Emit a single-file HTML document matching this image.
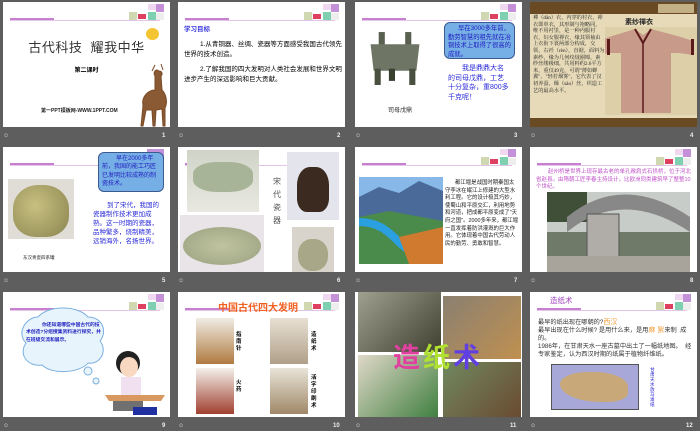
<!DOCTYPE html>
<html><head><meta charset="utf-8">
<style>
*{margin:0;padding:0;box-sizing:border-box}
body{width:700px;height:431px;background:#5e5e5e;position:relative;overflow:hidden;font-family:"Liberation Sans","Noto Sans CJK SC",sans-serif}
.s{position:absolute;width:167px;height:125px;background:#fff;overflow:hidden}
.a{position:absolute}
.hl{position:absolute;left:7px;top:16px;width:44px;height:2px;background:#c77fd0}
.hl2{position:absolute;left:7px;top:18px;width:150px;height:1px;background:#e4c4e8}
.dec{position:absolute;left:126px;top:2px;width:35px;height:17px}
.lab{position:absolute;color:#ddd;font-size:6px}
.num{position:absolute;color:#eee;font-size:6px;font-weight:bold}
.t{position:absolute;font-size:6.3px;line-height:9px}
.blue{color:#2b2bd8}
</style></head><body>

<div class="s" style="left:3px;top:2px">
 <div class="hl"></div><div class="hl2"></div>
 <svg class="dec" viewBox="0 0 35 17"><rect x="19" y="0" width="8" height="6" fill="#f0d8f0"/><rect x="27" y="0" width="8" height="8" fill="#c490d8"/><rect x="0" y="8" width="8" height="8" fill="#cfd8b0"/><rect x="9" y="10" width="8" height="5" fill="#e04060"/><rect x="19" y="8" width="8" height="8" fill="#7fd0b0"/><rect x="27" y="9" width="8" height="7" fill="#eee"/></svg>
 <div class="a" style="left:143px;top:26px;width:13px;height:12px;border-radius:50%;background:#f5c531"></div>
 <div class="a" style="left:0;top:35px;width:167px;text-align:center;font-size:13px;color:#333;letter-spacing:0.5px">古代科技&nbsp; 耀我中华</div>
 <div class="a" style="left:0;top:63px;width:167px;text-align:center;font-size:6px;font-weight:bold">第二课时</div>
 <div class="a" style="left:38px;top:105px;font-size:5px;font-weight:bold;color:#222">第一PPT模板网-WWW.1PPT.COM</div>
 <svg class="a" style="left:132px;top:60px" width="35" height="66" viewBox="0 0 35 66"><path d="M20 3l-3 6M26 2l2 6M22 8c-2 0-4 3-2 6l0 14c-6 0-14 6-12 16l-2 20 2 0 3-16 6 0 1 16 2 0 1-16 6-1 1 17 2 0 0-18c3-6 1-14-3-18l-1-14c2-2 1-5-2-5z" fill="#8a5a35" stroke="#7a4a25" stroke-width="1"/></svg>
</div>
<div class="lab" style="left:3px;top:133px">☺</div><div class="num" style="left:162px;top:133px">1</div>

<div class="s" style="left:178px;top:2px">
 <div class="hl"></div><div class="hl2"></div>
 <svg class="dec" viewBox="0 0 35 17"><rect x="19" y="0" width="8" height="6" fill="#f0d8f0"/><rect x="27" y="0" width="8" height="8" fill="#c490d8"/><rect x="0" y="8" width="8" height="8" fill="#cfd8b0"/><rect x="9" y="10" width="8" height="5" fill="#e04060"/><rect x="19" y="8" width="8" height="8" fill="#7fd0b0"/><rect x="27" y="9" width="8" height="7" fill="#eee"/></svg>
 <div class="a" style="left:6px;top:21px;font-size:6.5px;color:#3a3ae0;font-weight:bold">学习目标</div>
 <div class="t" style="left:6px;top:38px;width:158px;font-size:6.5px;line-height:10px;text-indent:16px">1.从青铜器、丝绸、瓷器等方面感受我国古代领先世界的技术创造。</div>
 <div class="t" style="left:6px;top:63px;width:158px;font-size:6.5px;line-height:10px;text-indent:16px">2.了解我国的四大发明对人类社会发展和世界文明进步产生的深远影响和巨大贡献。</div>
</div>
<div class="lab" style="left:178px;top:133px">☺</div><div class="num" style="left:337px;top:133px">2</div>

<div class="s" style="left:355px;top:2px">
 <div class="hl"></div><div class="hl2"></div>
 <svg class="dec" viewBox="0 0 35 17"><rect x="19" y="0" width="8" height="6" fill="#f0d8f0"/><rect x="27" y="0" width="8" height="8" fill="#c490d8"/><rect x="0" y="8" width="8" height="8" fill="#cfd8b0"/><rect x="9" y="10" width="8" height="5" fill="#e04060"/><rect x="19" y="8" width="8" height="8" fill="#7fd0b0"/><rect x="27" y="9" width="8" height="7" fill="#eee"/></svg>
 <svg class="a" style="left:13px;top:28px" width="54" height="56" viewBox="0 0 52 55"><rect x="10" y="2" width="6" height="14" fill="#5a6050"/><rect x="36" y="2" width="6" height="14" fill="#5a6050"/><path d="M2 14h48l-3 26H5z" fill="#6f7565"/><rect x="6" y="38" width="6" height="16" fill="#4a5040"/><rect x="40" y="38" width="6" height="16" fill="#4a5040"/><rect x="20" y="38" width="6" height="12" fill="#3a4030"/></svg>
 <div class="a" style="left:33px;top:103px;font-size:6px;color:#222">司母戊鼎</div>
 <div class="a" style="left:89px;top:20px;width:71px;height:37px;border-radius:6px;background:#76aee6;border:1px solid #3a5a90;font-size:6.3px;line-height:8.5px;color:#2020c0;padding:2px 3px;text-indent:10px">早在3000多年前，勤劳智慧的祖先就在冶铜技术上取得了很高的成就。</div>
 <div class="a blue" style="left:93px;top:62px;width:62px;font-size:7px;line-height:9.5px;text-indent:14px">我是鼎鼎大名的司母戊鼎，工艺十分复杂，重800多千克呢！</div>
</div>
<div class="lab" style="left:355px;top:133px">☺</div><div class="num" style="left:514px;top:133px">3</div>

<div class="s" style="left:530px;top:2px;background:#6a4a22">
 <div class="a" style="left:128px;top:2px;width:36px;height:9px;background:#d8c8a0;opacity:.8"></div>
 <div class="a" style="left:0;top:12px;width:167px;height:104px;background:#e6dab8"></div>
 <div class="a" style="left:3px;top:13px;width:72px;font-size:5.2px;line-height:6.6px;color:#222;font-family:'Liberation Serif','Noto Serif CJK SC',serif">襌（dān）衣，内穿的衬衣，禅衣即单衣，其形制与袍略同，唯不用衬里，是一种内服衬衣，妇女服禅衣，缘其领袖由上衣衔下裳两部分构成，交领，右衽（rèn），直裾，面料为素纱，缘为几何纹绒圈锦，素纱丝缕极细，共用料约2.6平方米，重仅49克，可谓"薄如蝉翼"、"轻若烟雾"，它代表了汉初养蚕，缫（sāo）丝，织造工艺的最高水平。</div>
 <div class="a" style="left:95px;top:15px;font-size:7px;font-weight:bold;color:#222">素纱禪衣</div>
 <svg class="a" style="left:75px;top:25px" width="92" height="88" viewBox="0 0 92 88"><rect width="92" height="88" fill="#ddd0a8"/><path d="M30 2l8 6 8-6 30 8 12 4 0 14-14-2-8 0 0 60-50 0 0-60-10 0-14 2 0-14 12-4z" fill="#c89a8a"/><path d="M30 2l8 14 8-14" stroke="#5a1a1a" stroke-width="2" fill="none"/><path d="M38 16l0 70" stroke="#5a1a1a" stroke-width="1.5"/><rect x="86" y="12" width="3" height="16" fill="#5a1a1a"/><rect x="2" y="12" width="3" height="16" fill="#5a1a1a"/></svg>
</div>
<div class="lab" style="left:530px;top:133px">☺</div><div class="num" style="left:690px;top:133px">4</div>

<div class="s" style="left:3px;top:147px">
 <div class="hl"></div><div class="hl2"></div>
 <div class="a" style="left:144px;top:2px;width:17px;height:14px;background:#c490d8"></div>
 <div class="a" style="left:5px;top:32px;width:66px;height:60px;background:#e0dcd6"></div>
 <div class="a" style="left:10px;top:38px;width:56px;height:52px;border-radius:45% 45% 40% 40%;background:radial-gradient(circle at 40% 40%,#c8c080,#8a8450)"></div>
 <div class="a" style="left:20px;top:108px;font-size:4.5px;color:#222">东汉青瓷四系罐</div>
 <div class="a" style="left:95px;top:5px;width:66px;height:40px;border-radius:6px;background:#76aee6;border:1px solid #3a5a90;font-size:6px;line-height:8.3px;color:#2020c0;padding:2px 3px;text-indent:14px">早在2000多年前，我国的能工巧匠已发明比较成熟的制瓷技术。</div>
 <div class="a blue" style="left:90px;top:54px;width:70px;font-size:6.5px;line-height:9px;text-indent:14px">到了宋代，我国的瓷器制作技术更加成熟。这一时期的瓷器，品种繁多，烧制精美，远销海外，名扬世界。</div>
</div>
<div class="lab" style="left:3px;top:278px">☺</div><div class="num" style="left:162px;top:278px">5</div>

<div class="s" style="left:178px;top:147px">
 <div class="hl"></div><div class="hl2"></div>
 <div class="a" style="left:9px;top:3px;width:72px;height:62px;background:linear-gradient(#d0d4c8,#e8e8e0)"></div>
 <div class="a" style="left:15px;top:15px;width:60px;height:30px;border-radius:40%;background:#a8b498"></div>
 <div class="a" style="left:2px;top:68px;width:84px;height:58px;background:#e8e4e8"></div>
 <div class="a" style="left:5px;top:80px;width:78px;height:38px;border-radius:50%;background:radial-gradient(#c0c4a0,#9aa080)"></div>
 <div class="a" style="left:95px;top:28px;width:10px;font-size:8px;line-height:13px;color:#555">宋代瓷器</div>
 <div class="a" style="left:109px;top:5px;width:52px;height:68px;background:#e4e4ec"></div>
 <div class="a" style="left:119px;top:20px;width:32px;height:45px;border-radius:40% 40% 30% 30%;background:#3a2a20"></div>
 <div class="a" style="left:114px;top:80px;width:42px;height:46px;background:#d8d4cc"></div>
 <div class="a" style="left:120px;top:92px;width:30px;height:32px;border-radius:45%;background:#a8a888"></div>
</div>
<div class="lab" style="left:178px;top:278px">☺</div><div class="num" style="left:337px;top:278px">6</div>

<div class="s" style="left:355px;top:147px">
 <div class="hl"></div><div class="hl2"></div>
 <svg class="dec" viewBox="0 0 35 17"><rect x="19" y="0" width="8" height="6" fill="#f0d8f0"/><rect x="27" y="0" width="8" height="8" fill="#c490d8"/><rect x="0" y="8" width="8" height="8" fill="#cfd8b0"/><rect x="9" y="10" width="8" height="5" fill="#e04060"/><rect x="19" y="8" width="8" height="8" fill="#7fd0b0"/><rect x="27" y="9" width="8" height="7" fill="#eee"/></svg>
 <svg class="a" style="left:4px;top:30px" width="84" height="87" viewBox="0 0 84 87"><rect width="84" height="87" fill="#88b8e8"/><path d="M0 20l20-10 20 6 20-12 24 10v73H0z" fill="#4a6a9a"/><path d="M0 40l30-6 54 10v43H0z" fill="#4a8a4a"/><path d="M0 45c20 0 30 10 40 20s20 14 30 22" stroke="#2aa0e0" stroke-width="8" fill="none"/><path d="M40 60l44-10v37H50z" fill="#d07a30"/></svg>
 <div class="a" style="left:90px;top:33px;width:74px;font-size:5.4px;line-height:7.6px;color:#222;text-indent:10px">都江堰是战国时期秦国太守李冰在岷江上修建的大型水利工程。它的设计极其巧妙，使蜀山和平原交汇，利用地势和河道，把成都平原变成了"天府之国"。2000多年来，都江堰一直发挥着防洪灌溉的巨大作用。它体现着中国古代劳动人民的勤劳、勇敢和智慧。</div>
</div>
<div class="lab" style="left:355px;top:278px">☺</div><div class="num" style="left:514px;top:278px">7</div>

<div class="s" style="left:530px;top:147px">
 <div class="hl"></div><div class="hl2"></div>
 <svg class="dec" viewBox="0 0 35 17"><rect x="19" y="0" width="8" height="6" fill="#f0d8f0"/><rect x="27" y="0" width="8" height="8" fill="#c490d8"/><rect x="0" y="8" width="8" height="8" fill="#cfd8b0"/><rect x="9" y="10" width="8" height="5" fill="#e04060"/><rect x="19" y="8" width="8" height="8" fill="#7fd0b0"/><rect x="27" y="9" width="8" height="7" fill="#eee"/></svg>
 <div class="a" style="left:6px;top:22px;width:158px;font-size:5.5px;line-height:7.5px;color:#c050c8;text-indent:12px">赵州桥是世界上现存最古老的单孔敞肩式石拱桥，位于河北省赵县。由隋朝工匠李春主持设计，比欧洲同类建筑早了整整10个世纪。</div>
 <svg class="a" style="left:17px;top:45px" width="143" height="80" viewBox="0 0 143 80"><rect width="143" height="80" fill="#c8ccc8"/><rect y="0" width="40" height="30" fill="#405038"/><path d="M20 40Q75 -5 143 40V25Q75 -20 20 25z" fill="#888"/><rect y="40" width="143" height="25" fill="#707a68"/><rect x="40" y="22" width="32" height="50" fill="#b0aca8" stroke="#555"/><rect y="64" width="143" height="16" fill="#a8a49c"/></svg>
</div>
<div class="lab" style="left:530px;top:278px">☺</div><div class="num" style="left:690px;top:278px">8</div>

<div class="s" style="left:3px;top:292px">
 <div class="hl"></div><div class="hl2"></div>
 <svg class="dec" viewBox="0 0 35 17"><rect x="19" y="0" width="8" height="6" fill="#f0d8f0"/><rect x="27" y="0" width="8" height="8" fill="#c490d8"/><rect x="0" y="8" width="8" height="8" fill="#cfd8b0"/><rect x="9" y="10" width="8" height="5" fill="#e04060"/><rect x="19" y="8" width="8" height="8" fill="#7fd0b0"/><rect x="27" y="9" width="8" height="7" fill="#eee"/></svg>
 <svg class="a" style="left:15px;top:15px" width="90" height="80" viewBox="0 0 90 80"><path d="M20 10c10-12 40-12 50 0 14 0 20 14 12 24 8 10 0 24-12 22-8 10-36 12-46 2-14 2-24-10-16-22-10-10 0-26 12-26z" fill="#e8f4fc" stroke="#7ab0e0"/><circle cx="70" cy="64" r="4" fill="#e8f4fc" stroke="#7ab0e0"/><circle cx="78" cy="74" r="3" fill="#e8f4fc" stroke="#7ab0e0"/></svg>
 <div class="a" style="left:23px;top:30px;width:78px;font-size:4.8px;line-height:7.3px;color:#2020c0;font-weight:bold;text-indent:16px">你还知道哪些中国古代的技术创造?分组搜集资料进行探究，并在班级交流和展示。</div>
 <svg class="a" style="left:100px;top:55px" width="66" height="70" viewBox="0 0 66 70"><ellipse cx="25" cy="16" rx="12" ry="12" fill="#222"/><ellipse cx="26" cy="20" rx="9" ry="10" fill="#f8d8c0"/><rect x="18" y="30" width="20" height="18" fill="#f0e0f0"/><path d="M2 48h60l-4 6H6z" fill="#d89860"/><rect x="10" y="54" width="30" height="10" fill="#707070"/><rect x="30" y="60" width="24" height="8" fill="#2030a0"/></svg>
</div>
<div class="lab" style="left:3px;top:423px">☺</div><div class="num" style="left:162px;top:423px">9</div>

<div class="s" style="left:178px;top:292px">
 <div class="hl"></div><div class="hl2"></div>
 <svg class="dec" viewBox="0 0 35 17"><rect x="19" y="0" width="8" height="6" fill="#f0d8f0"/><rect x="27" y="0" width="8" height="8" fill="#c490d8"/><rect x="0" y="8" width="8" height="8" fill="#cfd8b0"/><rect x="9" y="10" width="8" height="5" fill="#e04060"/><rect x="19" y="8" width="8" height="8" fill="#7fd0b0"/><rect x="27" y="9" width="8" height="7" fill="#eee"/></svg>
 <div class="a" style="left:40px;top:7px;font-size:10px;font-weight:bold;color:#f06020">中国古代四大发明</div>
 <div class="a" style="left:18px;top:26px;width:38px;height:46px;background:linear-gradient(#f0ece4,#b07a40)"></div>
 <div class="a" style="left:58px;top:40px;width:8px;font-size:5.5px;line-height:7px;font-weight:bold">指南针</div>
 <div class="a" style="left:92px;top:26px;width:38px;height:46px;background:linear-gradient(#e8e0d4,#b0a088)"></div>
 <div class="a" style="left:133px;top:40px;width:8px;font-size:5.5px;line-height:7px;font-weight:bold">造纸术</div>
 <div class="a" style="left:18px;top:76px;width:38px;height:46px;background:linear-gradient(#f4f0ea,#a04030)"></div>
 <div class="a" style="left:58px;top:88px;width:8px;font-size:5.5px;line-height:7px;font-weight:bold">火药</div>
 <div class="a" style="left:92px;top:76px;width:38px;height:46px;background:linear-gradient(#e8e4d8,#a08868)"></div>
 <div class="a" style="left:133px;top:83px;width:8px;font-size:5.5px;line-height:7px;font-weight:bold">活字印刷术</div>
</div>
<div class="lab" style="left:178px;top:423px">☺</div><div class="num" style="left:333px;top:423px">10</div>

<div class="s" style="left:355px;top:292px">
 <div class="a" style="left:3px;top:0;width:83px;height:60px;background:linear-gradient(135deg,#a0a090,#404030)"></div>
 <div class="a" style="left:88px;top:4px;width:78px;height:63px;background:linear-gradient(135deg,#8a8070,#c09050)"></div>
 <div class="a" style="left:3px;top:63px;width:80px;height:62px;background:linear-gradient(135deg,#e0d8c8,#408040)"></div>
 <div class="a" style="left:88px;top:70px;width:78px;height:56px;background:linear-gradient(135deg,#708860,#6a4a30)"></div>
 <div class="a" style="left:38px;top:44px;font-size:27px;font-weight:bold;letter-spacing:3px;white-space:nowrap"><span style="color:#e040a0">造</span><span style="color:#b0e030">纸</span><span style="color:#6040e0">术</span></div>
</div>
<div class="lab" style="left:355px;top:423px">☺</div><div class="num" style="left:510px;top:423px">11</div>

<div class="s" style="left:530px;top:292px">
 <div class="hl"></div><div class="hl2"></div>
 <svg class="dec" viewBox="0 0 35 17"><rect x="19" y="0" width="8" height="6" fill="#f0d8f0"/><rect x="27" y="0" width="8" height="8" fill="#c490d8"/><rect x="0" y="8" width="8" height="8" fill="#cfd8b0"/><rect x="9" y="10" width="8" height="5" fill="#e04060"/><rect x="19" y="8" width="8" height="8" fill="#7fd0b0"/><rect x="27" y="9" width="8" height="7" fill="#eee"/></svg>
 <div class="a" style="left:20px;top:3px;font-size:7.5px;color:#a040c0">造纸术</div>
 <div class="a" style="left:8px;top:27px;width:156px;font-size:6.2px;line-height:8px;color:#333">最早的纸出现在哪朝的?<span style="color:#f0a040;font-size:7px">西汉</span><br>最早出现在什么时候? 是用什么来，是用<span style="color:#f0a040;font-size:7px">麻 絮</span>来制&nbsp;&nbsp;成的。<br>1986年，在甘肃天水一座古墓中出土了一幅纸地图。&nbsp;&nbsp;经专家鉴定，认为西汉时期的纸属于植物纤维纸。</div>
 <div class="a" style="left:21px;top:72px;width:88px;height:46px;background:#a8a8d8;border:1px solid #555"></div>
 <div class="a" style="left:30px;top:80px;width:68px;height:30px;border-radius:40% 50% 30% 60%;background:#c8a878"></div>
 <div class="a" style="left:120px;top:75px;width:6px;font-size:4.5px;line-height:5px;color:#2020d0">甘肃天水放马滩纸</div>
</div>
<div class="lab" style="left:530px;top:423px">☺</div><div class="num" style="left:686px;top:423px">12</div>

</body></html>
